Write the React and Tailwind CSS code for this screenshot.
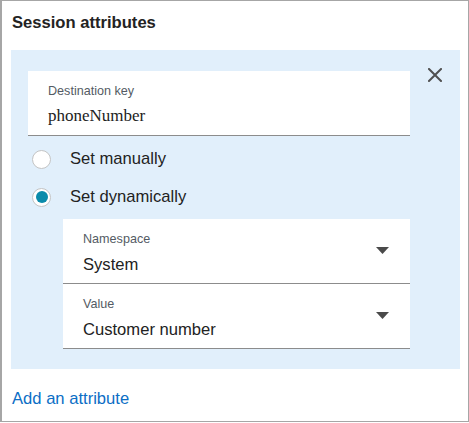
import React from "react";

const font = { fontFamily: '"Liberation Sans", Arial, sans-serif' };

function Caret() {
  return (
    <svg width="13" height="7" viewBox="0 0 13 7" className="block">
      <polygon points="0,0 13,0 6.5,7" fill="#4a4a4a" />
    </svg>
  );
}

function SelectField({ label, value }) {
  return (
    <div className="flex items-center bg-white border-b border-[#8c8c8c] h-[65px]">
      <div className="flex-1 pl-[20px] pt-[12px] pb-[8px]">
        <div className="text-[12.6px] leading-[17px] text-[#545b64]">{label}</div>
        <div className="mt-[6px] text-[16.6px] leading-[22px] text-[#222]">{value}</div>
      </div>
      <div className="pr-[21px] pb-[1px]">
        <Caret />
      </div>
    </div>
  );
}

function Radio({ checked, label }) {
  return (
    <div className="flex items-center h-[38px] pl-[4px]">
      {checked ? (
        <div className="w-[19px] h-[19px] rounded-full bg-white border border-[#c4c4c4] flex items-center justify-center">
          <div className="w-[12px] h-[12px] rounded-full bg-[#0a8bab]" />
        </div>
      ) : (
        <div className="w-[19px] h-[19px] rounded-full bg-white border border-[#c4c4c4]" />
      )}
      <span className="ml-[19px] text-[16.6px] leading-[20px] text-[#222]">{label}</span>
    </div>
  );
}

export default function App() {
  return (
    <div className="w-[469px] h-[423px] bg-white" style={font}>
      <div className="w-[469px] h-[422px] border border-l-2 border-[#a6a6a6] pl-[9px] pr-[8px] pt-[12px]">
        <div className="text-[16.6px] leading-[20px] font-bold text-[#232323] pl-[1px]">Session attributes</div>
        <div className="mt-[17px] h-[319px] bg-[#e1effb] pl-[17px] pt-[21px] pb-[20px] flex items-start">
          <div className="w-[382px]">
            <div className="bg-white border-b border-[#8c8c8c] h-[65px] pl-[20px] pt-[12px]">
              <div className="text-[12.6px] leading-[17px] text-[#545b64]">Destination key</div>
              <div
                className="mt-[5px] text-[17px] leading-[22px] text-[#222]"
                style={{ fontFamily: '"Liberation Serif", "Times New Roman", serif' }}
              >
                phoneNumber
              </div>
            </div>
            <div className="mt-[4px]">
              <Radio label="Set manually" />
              <Radio checked label="Set dynamically" />
            </div>
            <div className="mt-[3px] pl-[35px]">
              <SelectField label="Namespace" value="System" />
              <SelectField label="Value" value="Customer number" />
            </div>
          </div>
          <div className="w-[50px] flex justify-center mt-[-3px]">
            <svg width="14" height="14" viewBox="0 0 14 14">
              <path d="M1 1 L13 13 M13 1 L1 13" stroke="#505050" strokeWidth="2" strokeLinecap="square" fill="none" />
            </svg>
          </div>
        </div>
        <div className="mt-[20px] text-[16.6px] leading-[20px] text-[#0b6ec5] pl-[1px]">Add an attribute</div>
      </div>
    </div>
  );
}
